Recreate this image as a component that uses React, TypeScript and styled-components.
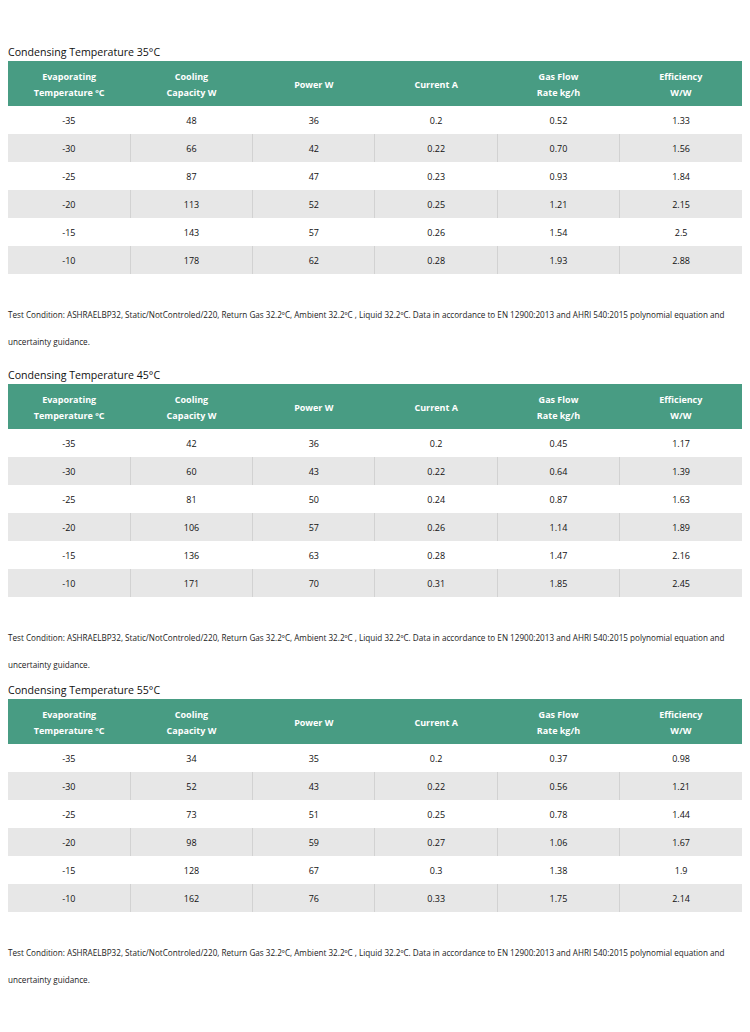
import styled, { createGlobalStyle } from "styled-components";

const GlobalStyle = createGlobalStyle`
  body {
    margin: 0;
    background: #fff;
    font-family: "Open Sans", "Liberation Sans", sans-serif;
    color: #111;
  }
`;

const Page = styled.div`
  padding: 44px 8px 0 8px;
`;

const Section = styled.section<{ $gap: number }>`
  margin-bottom: ${(p) => p.$gap}px;
`;

const Title = styled.h3`
  margin: 0;
  height: 17px;
  font-size: 10.6px;
  font-weight: 400;
  line-height: 17px;
  color: #111;
`;

const Table = styled.table`
  width: 100%;
  border-collapse: collapse;
  table-layout: fixed;
`;

const HeadCell = styled.th`
  height: 42px;
  padding: 3px 4px 0 4px;
  background: #489c83;
  color: #fff;
  font-size: 9px;
  font-weight: 700;
  line-height: 16px;
  text-align: center;
`;

const Row = styled.tr<{ $shade: boolean }>`
  height: 28px;
  background: ${(p) => (p.$shade ? "#e7e7e7" : "#fff")};
`;

const Cell = styled.td<{ $shade: boolean }>`
  padding: 0;
  font-size: 9px;
  text-align: center;
  color: #111;
  border-left: 1px solid ${(p) => (p.$shade ? "#d2d2d2" : "#fff")};

  &:first-child {
    border-left: none;
  }
`;

const Note = styled.p`
  margin: 27px 0 0 0;
  font-size: 8.15px;
  line-height: 27px;
  color: #222;
`;

const headers = [
  ["Evaporating", "Temperature ºC"],
  ["Cooling", "Capacity W"],
  ["Power W"],
  ["Current A"],
  ["Gas Flow", "Rate kg/h"],
  ["Efficiency", "W/W"],
];

const evap = ["-35", "-30", "-25", "-20", "-15", "-10"];

const tables = [
  {
    temp: 35,
    gap: 12,
    cols: [
      ["48", "66", "87", "113", "143", "178"],
      ["36", "42", "47", "52", "57", "62"],
      ["0.2", "0.22", "0.23", "0.25", "0.26", "0.28"],
      ["0.52", "0.70", "0.93", "1.21", "1.54", "1.93"],
      ["1.33", "1.56", "1.84", "2.15", "2.5", "2.88"],
    ],
  },
  {
    temp: 45,
    gap: 4,
    cols: [
      ["42", "60", "81", "106", "136", "171"],
      ["36", "43", "50", "57", "63", "70"],
      ["0.2", "0.22", "0.24", "0.26", "0.28", "0.31"],
      ["0.45", "0.64", "0.87", "1.14", "1.47", "1.85"],
      ["1.17", "1.39", "1.63", "1.89", "2.16", "2.45"],
    ],
  },
  {
    temp: 55,
    gap: 20,
    cols: [
      ["34", "52", "73", "98", "128", "162"],
      ["35", "43", "51", "59", "67", "76"],
      ["0.2", "0.22", "0.25", "0.27", "0.3", "0.33"],
      ["0.37", "0.56", "0.78", "1.06", "1.38", "1.75"],
      ["0.98", "1.21", "1.44", "1.67", "1.9", "2.14"],
    ],
  },
];

const note =
  "Test Condition: ASHRAELBP32, Static/NotControled/220, Return Gas 32.2ºC, Ambient 32.2ºC , Liquid 32.2ºC. Data in accordance to EN 12900:2013 and AHRI 540:2015 polynomial equation and uncertainty guidance.";

export default function App() {
  return (
    <>
      <GlobalStyle />
      <Page>
        {tables.map((t) => (
          <Section key={t.temp} $gap={t.gap}>
            <Title>Condensing Temperature {t.temp}°C</Title>
            <Table>
              <thead>
                <tr>
                  {headers.map((h) => (
                    <HeadCell key={h[0]}>
                      {h.map((line, i) => (
                        <span key={line}>
                          {i > 0 && <br />}
                          {line}
                        </span>
                      ))}
                    </HeadCell>
                  ))}
                </tr>
              </thead>
              <tbody>
                {evap.map((e, r) => {
                  const shade = r % 2 === 1;
                  return (
                    <Row key={e} $shade={shade}>
                      <Cell $shade={shade}>{e}</Cell>
                      {t.cols.map((c, ci) => (
                        <Cell key={ci} $shade={shade}>
                          {c[r]}
                        </Cell>
                      ))}
                    </Row>
                  );
                })}
              </tbody>
            </Table>
            <Note>{note}</Note>
          </Section>
        ))}
      </Page>
    </>
  );
}
